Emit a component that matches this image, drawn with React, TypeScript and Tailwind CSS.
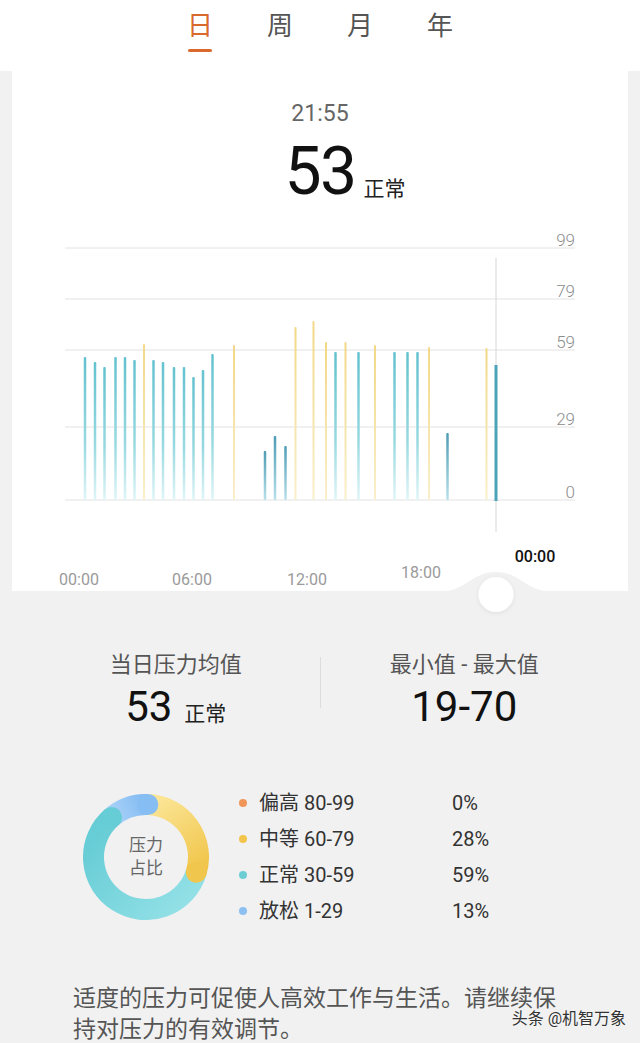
import React from "react";

const FONT = "font-['Roboto','Noto_Sans_CJK_SC',sans-serif]";

type BarKind = "t" | "y" | "b";

// page x, top y, kind (t = normal, y = medium, b = relaxed)
const bars: [number, number, BarKind][] = [
  [85, 357, "t"],
  [95, 362, "t"],
  [104.5, 367, "t"],
  [115.5, 357, "t"],
  [125, 357, "t"],
  [134.5, 360, "t"],
  [144, 344, "y"],
  [153.5, 360, "t"],
  [163, 362, "t"],
  [174, 367, "t"],
  [184, 367, "t"],
  [193.5, 377, "t"],
  [203, 370, "t"],
  [212.5, 354, "t"],
  [234, 345, "y"],
  [265, 451, "b"],
  [275, 436, "b"],
  [285.5, 446, "b"],
  [295.5, 327, "y"],
  [313.5, 321, "y"],
  [326, 342, "y"],
  [335.5, 352, "t"],
  [345.5, 342, "y"],
  [358.5, 352, "t"],
  [375, 345, "y"],
  [394.5, 352, "t"],
  [407.5, 352, "t"],
  [417.5, 352, "t"],
  [429, 347, "y"],
  [447.5, 433, "b"],
  [486.5, 348, "y"],
];

const gridLines = [
  { v: "99", y: 248 },
  { v: "79", y: 299 },
  { v: "59", y: 350 },
  { v: "29", y: 427 },
  { v: "0", y: 500 },
];

const xLabels = [
  { t: "00:00", x: 79, y: 585 },
  { t: "06:00", x: 192, y: 585 },
  { t: "12:00", x: 307, y: 585 },
  { t: "18:00", x: 421, y: 578 },
];

const legend = [
  { label: "偏高 80-99", pct: "0%", dot: "bg-[#f0955a]" },
  { label: "中等 60-79", pct: "28%", dot: "bg-[#f2c44c]" },
  { label: "正常 30-59", pct: "59%", dot: "bg-[#6dcdd5]" },
  { label: "放松 1-29", pct: "13%", dot: "bg-[#8dc0f2]" },
];

function StressChart() {
  return (
    <svg
      width={616}
      height={366}
      viewBox="12 225 616 366"
      className="block overflow-visible"
    >
      <defs>
        <linearGradient id="gt" x1="0" y1="0" x2="0" y2="1">
          <stop offset="0" stopColor="#63c2cf" />
          <stop offset="0.6" stopColor="#98d9e1" />
          <stop offset="1" stopColor="#e0f5f7" />
        </linearGradient>
        <linearGradient id="gy" x1="0" y1="0" x2="0" y2="1">
          <stop offset="0" stopColor="#f2d886" />
          <stop offset="1" stopColor="#f9efcb" />
        </linearGradient>
        <linearGradient id="gb" x1="0" y1="0" x2="0" y2="1">
          <stop offset="0" stopColor="#4d9cb5" />
          <stop offset="1" stopColor="#b9e0ea" />
        </linearGradient>
        <filter id="knob" x="-50%" y="-50%" width="200%" height="200%">
          <feDropShadow dx="0" dy="1" stdDeviation="2" floodColor="#000" floodOpacity="0.08" />
        </filter>
      </defs>

      {gridLines.map((g) => (
        <g key={g.v}>
          <line x1={65} x2={575} y1={g.y} y2={g.y} stroke="#e2e2e2" strokeWidth={1} />
          <text
            x={575}
            y={g.y - 2}
            textAnchor="end"
            fontSize={17}
            fontWeight={300}
            fill="#8c8c8c"
            fontFamily="Roboto, 'Noto Sans CJK SC', sans-serif"
          >
            {g.v}
          </text>
        </g>
      ))}

      {bars.map(([x, top, kind], i) => (
        <rect
          key={i}
          x={x - (kind === "y" ? 1 : 1.25)}
          y={top}
          width={kind === "y" ? 2 : 2.5}
          height={500 - top}
          rx={1}
          fill={`url(#g${kind})`}
        />
      ))}

      {/* cursor */}
      <line x1={496} x2={496} y1={258} y2={532} stroke="#d6d6d6" strokeWidth={1} />
      <rect x={494.5} y={365} width={3} height={136} fill="#4aa3b6" />

      {xLabels.map((l) => (
        <text
          key={l.t + l.x}
          x={l.x}
          y={l.y}
          textAnchor="middle"
          fontSize={16}
          fill="#9a9a9a"
          fontFamily="Roboto, 'Noto Sans CJK SC', sans-serif"
        >
          {l.t}
        </text>
      ))}
      <text
        x={535}
        y={562}
        textAnchor="middle"
        fontSize={16}
        fontWeight={500}
        fill="#111"
        fontFamily="Roboto, 'Noto Sans CJK SC', sans-serif"
      >
        00:00
      </text>

      {/* knob notch */}
      <path
        d="M 436 592 C 468 592 470 572 496 572 C 522 572 524 592 556 592 Z"
        fill="#f1f1f1"
      />
      <circle cx={496} cy={594.5} r={17.5} fill="#fff" filter="url(#knob)" />
    </svg>
  );
}

function arcPoint(cx: number, cy: number, r: number, deg: number) {
  const a = (deg * Math.PI) / 180;
  return [cx + r * Math.sin(a), cy - r * Math.cos(a)];
}

function arcPath(cx: number, cy: number, r: number, from: number, to: number) {
  const [x1, y1] = arcPoint(cx, cy, r, from);
  const [x2, y2] = arcPoint(cx, cy, r, to);
  const large = to - from > 180 ? 1 : 0;
  return `M ${x1} ${y1} A ${r} ${r} 0 ${large} 1 ${x2} ${y2}`;
}

function Donut() {
  const c = 63;
  const r = 52.5;
  const segs = [
    { from: 2, to: 107, stroke: "url(#dy)", cap: "#f1c64c" },
    { from: 107, to: 319, stroke: "url(#dt)", cap: "#66ccd5" },
    { from: 319, to: 362, stroke: "url(#db)", cap: "#86bdf3" },
  ];
  return (
    <div className="relative w-[126px] h-[126px] shrink-0">
      <svg width={126} height={126} viewBox="0 0 126 126" className="block">
        <defs>
          <linearGradient id="dy" gradientUnits="userSpaceOnUse" x1="70" y1="10" x2="115" y2="80">
            <stop offset="0" stopColor="#fbe494" />
            <stop offset="1" stopColor="#f0c447" />
          </linearGradient>
          <linearGradient id="dt" gradientUnits="userSpaceOnUse" x1="10" y1="40" x2="100" y2="120">
            <stop offset="0" stopColor="#66ccd5" />
            <stop offset="1" stopColor="#94e1e7" />
          </linearGradient>
          <linearGradient id="db" gradientUnits="userSpaceOnUse" x1="25" y1="30" x2="65" y2="10">
            <stop offset="0" stopColor="#b1d7f8" />
            <stop offset="1" stopColor="#82baf2" />
          </linearGradient>
        </defs>
        {segs.map((s, i) => (
          <path
            key={i}
            d={arcPath(c, c, r, s.from, s.to)}
            fill="none"
            stroke={s.stroke}
            strokeWidth={21}
          />
        ))}
        {segs.map((s, i) => {
          const [x, y] = arcPoint(c, c, r, s.to);
          return <circle key={i} cx={x} cy={y} r={10.5} fill={s.cap} />;
        })}
      </svg>
      <div className="absolute inset-0 flex flex-col items-center justify-center text-[17px] leading-[23px] text-[#666]">
        <span>压力</span>
        <span>占比</span>
      </div>
    </div>
  );
}

export default function App() {
  return (
    <div className={`${FONT} relative w-[640px] h-[1043px] overflow-hidden bg-[#f1f1f1]`}>
      {/* Period tabs */}
      <div className="h-[71px] bg-white flex justify-center pt-[10px]">
        {["日", "周", "月", "年"].map((t, i) => (
          <div key={t} className="w-20 flex flex-col items-center">
            <span
              className={
                i === 0
                  ? "text-[26px] leading-[32px] text-[#d9692f]"
                  : "text-[26px] leading-[32px] text-[#555]"
              }
            >
              {t}
            </span>
            {i === 0 && <div className="mt-[7px] w-6 h-[3px] rounded-full bg-[#d9692f]" />}
          </div>
        ))}
      </div>

      {/* Chart card */}
      <div className="mx-3 bg-white relative">
        <div className="pt-[29px] text-center text-[23px] leading-[28px] text-[#666]">21:55</div>
        <div className="mt-[12px] flex justify-center">
          <div className="relative">
            <span className="block text-[66px] leading-[64px] text-[#111] tracking-tight">53</span>
            <span className="absolute left-full bottom-[1px] ml-2 text-[21px] leading-[28px] text-[#222] whitespace-nowrap">
              正常
            </span>
          </div>
        </div>
        <div className="mt-[21px]">
          <StressChart />
        </div>
      </div>

      {/* Average and range */}
      <div className="px-8 pt-[59px] flex">
        <div className="flex-1 flex flex-col items-center">
          <span className="text-[22px] leading-[30px] text-[#555]">当日压力均值</span>
          <div className="mt-[6px] flex items-baseline">
            <span className="text-[42px] leading-[42px] text-[#111]">53</span>
            <span className="ml-3 text-[21px] text-[#222]">正常</span>
          </div>
        </div>
        <div className="w-px h-[51px] mt-[7px] bg-[#dcdcdc]" />
        <div className="flex-1 flex flex-col items-center">
          <span className="text-[22px] leading-[30px] text-[#555]">最小值 - 最大值</span>
          <span className="mt-[6px] text-[42px] leading-[42px] text-[#111]">19-70</span>
        </div>
      </div>

      {/* Distribution */}
      <div className="mt-[54px] pl-[83px] flex items-center">
        <Donut />
        <div className="ml-[30px] flex flex-col">
          {legend.map((l) => (
            <div key={l.label} className="h-9 flex items-center">
              <span className={`w-2 h-2 rounded-full ${l.dot}`} />
              <span className="ml-3 w-[193px] text-[20px] text-[#333]">{l.label}</span>
              <span className="text-[20px] text-[#333]">{l.pct}</span>
            </div>
          ))}
        </div>
      </div>

      <div className="mt-[54px] ml-[73px] flex flex-col items-start text-[23px] leading-[31px] text-[#555]">
        <span>适度的压力可促使人高效工作与生活。请继续保</span>
        <span>持对压力的有效调节。</span>
      </div>

      <div className="absolute right-[14px] bottom-[12px] text-[16px] text-[#333] [text-shadow:0_0_2px_#fff]">
        头条 @机智万象
      </div>
    </div>
  );
}
